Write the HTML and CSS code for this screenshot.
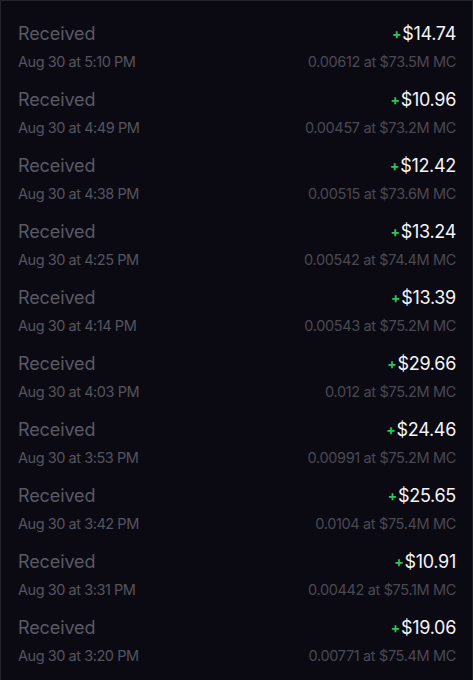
FILE: index.html
```html
<!DOCTYPE html>
<html lang="en">
<head>
    <meta charset="UTF-8">
    <meta name="viewport" content="width=device-width, initial-scale=1.0">
    <title>Activity</title>
    <link rel="stylesheet" href="styles.css">
</head>
<body>
    <div class="activity">
        <div class="tx">
            <div class="tx-line"><span class="tx-type">Received</span><span class="tx-amount"><span class="plus">+</span>$14.74</span></div>
            <div class="tx-line"><span class="tx-date">Aug 30 at 5:10 PM</span><span class="tx-detail">0.00612 at $73.5M MC</span></div>
        </div>
        <div class="tx">
            <div class="tx-line"><span class="tx-type">Received</span><span class="tx-amount"><span class="plus">+</span>$10.96</span></div>
            <div class="tx-line"><span class="tx-date">Aug 30 at 4:49 PM</span><span class="tx-detail">0.00457 at $73.2M MC</span></div>
        </div>
        <div class="tx">
            <div class="tx-line"><span class="tx-type">Received</span><span class="tx-amount"><span class="plus">+</span>$12.42</span></div>
            <div class="tx-line"><span class="tx-date">Aug 30 at 4:38 PM</span><span class="tx-detail">0.00515 at $73.6M MC</span></div>
        </div>
        <div class="tx">
            <div class="tx-line"><span class="tx-type">Received</span><span class="tx-amount"><span class="plus">+</span>$13.24</span></div>
            <div class="tx-line"><span class="tx-date">Aug 30 at 4:25 PM</span><span class="tx-detail">0.00542 at $74.4M MC</span></div>
        </div>
        <div class="tx">
            <div class="tx-line"><span class="tx-type">Received</span><span class="tx-amount"><span class="plus">+</span>$13.39</span></div>
            <div class="tx-line"><span class="tx-date">Aug 30 at 4:14 PM</span><span class="tx-detail">0.00543 at $75.2M MC</span></div>
        </div>
        <div class="tx">
            <div class="tx-line"><span class="tx-type">Received</span><span class="tx-amount"><span class="plus">+</span>$29.66</span></div>
            <div class="tx-line"><span class="tx-date">Aug 30 at 4:03 PM</span><span class="tx-detail">0.012 at $75.2M MC</span></div>
        </div>
        <div class="tx">
            <div class="tx-line"><span class="tx-type">Received</span><span class="tx-amount"><span class="plus">+</span>$24.46</span></div>
            <div class="tx-line"><span class="tx-date">Aug 30 at 3:53 PM</span><span class="tx-detail">0.00991 at $75.2M MC</span></div>
        </div>
        <div class="tx">
            <div class="tx-line"><span class="tx-type">Received</span><span class="tx-amount"><span class="plus">+</span>$25.65</span></div>
            <div class="tx-line"><span class="tx-date">Aug 30 at 3:42 PM</span><span class="tx-detail">0.0104 at $75.4M MC</span></div>
        </div>
        <div class="tx">
            <div class="tx-line"><span class="tx-type">Received</span><span class="tx-amount"><span class="plus">+</span>$10.91</span></div>
            <div class="tx-line"><span class="tx-date">Aug 30 at 3:31 PM</span><span class="tx-detail">0.00442 at $75.1M MC</span></div>
        </div>
        <div class="tx">
            <div class="tx-line"><span class="tx-type">Received</span><span class="tx-amount"><span class="plus">+</span>$19.06</span></div>
            <div class="tx-line"><span class="tx-date">Aug 30 at 3:20 PM</span><span class="tx-detail">0.00771 at $75.4M MC</span></div>
        </div>
    </div>
</body>
</html>
```

FILE: styles.css
```css
html {
    background-color: #0b0a13;
}
body {
    margin: 0;
    font-family: Inter, "Noto Sans", sans-serif;
    background-color: #0b0a13;
    height: 680px;
    overflow: hidden;
}
.activity {
    border: 1px solid #23232b;
    border-bottom: none;
    height: 680px;
    box-sizing: border-box;
    padding-top: 12px;
}
.tx {
    height: 66px;
    box-sizing: border-box;
    padding: 10px 16px 0 17px;
}
.tx-line {
    display: flex;
    justify-content: space-between;
    align-items: center;
    height: 22px;
}
.tx-line + .tx-line {
    margin-top: 6px;
}
.tx-type {
    font-size: 18px;
    line-height: 22px;
    color: #5a5963;
    letter-spacing: -0.1px;
}
.tx-amount {
    font-size: 18px;
    line-height: 22px;
    color: #f4f4f6;
    letter-spacing: -0.3px;
}
.plus {
    color: #2ec45a;
    font-size: 14px;
    font-weight: 700;
    margin-right: 1px;
    vertical-align: 1px;
}
.tx-date {
    font-size: 14.5px;
    line-height: 18px;
    color: #55545e;
    letter-spacing: -0.45px;
}
.tx-detail {
    font-size: 14.5px;
    line-height: 18px;
    color: #4a4952;
    letter-spacing: -0.35px;
}
```
